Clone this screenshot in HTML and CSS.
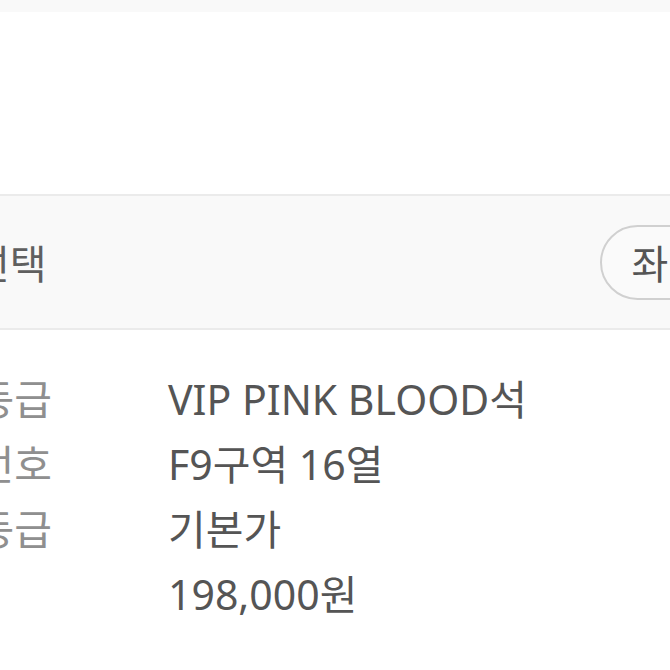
FILE: index.html
```html
<!DOCTYPE html>
<html lang="ko">
<head>
    <meta charset="UTF-8">
    <title>좌석 선택</title>
    <meta name="viewport" content="width=device-width, initial-scale=1.0">
    <link rel="stylesheet" href="styles.css">
</head>
<body>
    <!-- Top strip -->
    <div class="top-strip"></div>

    <!-- Empty area above seat section -->
    <div class="blank-area"></div>

    <!-- Seat selection header -->
    <section class="seat-head">
        <h2 class="seat-title">좌석 선택</h2>
        <button class="seat-btn">좌석 변경</button>
    </section>

    <!-- Seat details -->
    <dl class="seat-info">
        <dt>좌석등급</dt>
        <dd>VIP PINK BLOOD석</dd>
        <dt>좌석번호</dt>
        <dd>F9구역 16열</dd>
        <dt>가격등급</dt>
        <dd>기본가</dd>
        <dt></dt>
        <dd>198,000원</dd>
    </dl>
</body>
</html>
```

FILE: styles.css
```css
/* Reset default margin and padding */
* {
    margin: 0;
    padding: 0;
    box-sizing: border-box;
}

body {
    width: 670px;
    height: 670px;
    overflow: hidden;
    background-color: #ffffff;
    font-family: "Noto Sans", "Noto Sans CJK KR", sans-serif;
}

/* Top strip */
.top-strip {
    height: 12px;
    background-color: #f9f9f9;
}

.blank-area {
    height: 182px;
}

/* Seat selection header */
.seat-head {
    display: flex;
    align-items: center;
    height: 136px;
    background-color: #f9f9f9;
    border-top: 2px solid #ebebeb;
    border-bottom: 2px solid #ebebeb;
}

.seat-title {
    flex: 1;
    min-width: 0;
    margin-left: -111px;
    font-size: 40px;
    font-weight: normal;
    color: #5f5f5f;
    white-space: nowrap;
}

.seat-btn {
    flex-shrink: 0;
    margin-right: -149px;
    height: 75px;
    padding: 0 28px 0 29px;
    border: 2px solid #d0d0d0;
    border-radius: 38px;
    background-color: #fafafa;
    font-family: inherit;
    font-size: 40px;
    color: #555555;
    white-space: nowrap;
}

/* Seat details */
.seat-info {
    display: grid;
    grid-template-columns: 200px 1fr;
    column-gap: 116px;
    margin-left: -148px;
    padding-top: 37px;
    font-size: 41px;
    line-height: 65px;
}

.seat-info dt {
    text-align: right;
    color: #8f8f8f;
    white-space: nowrap;
}

.seat-info dd {
    color: #555555;
    white-space: nowrap;
}
```
